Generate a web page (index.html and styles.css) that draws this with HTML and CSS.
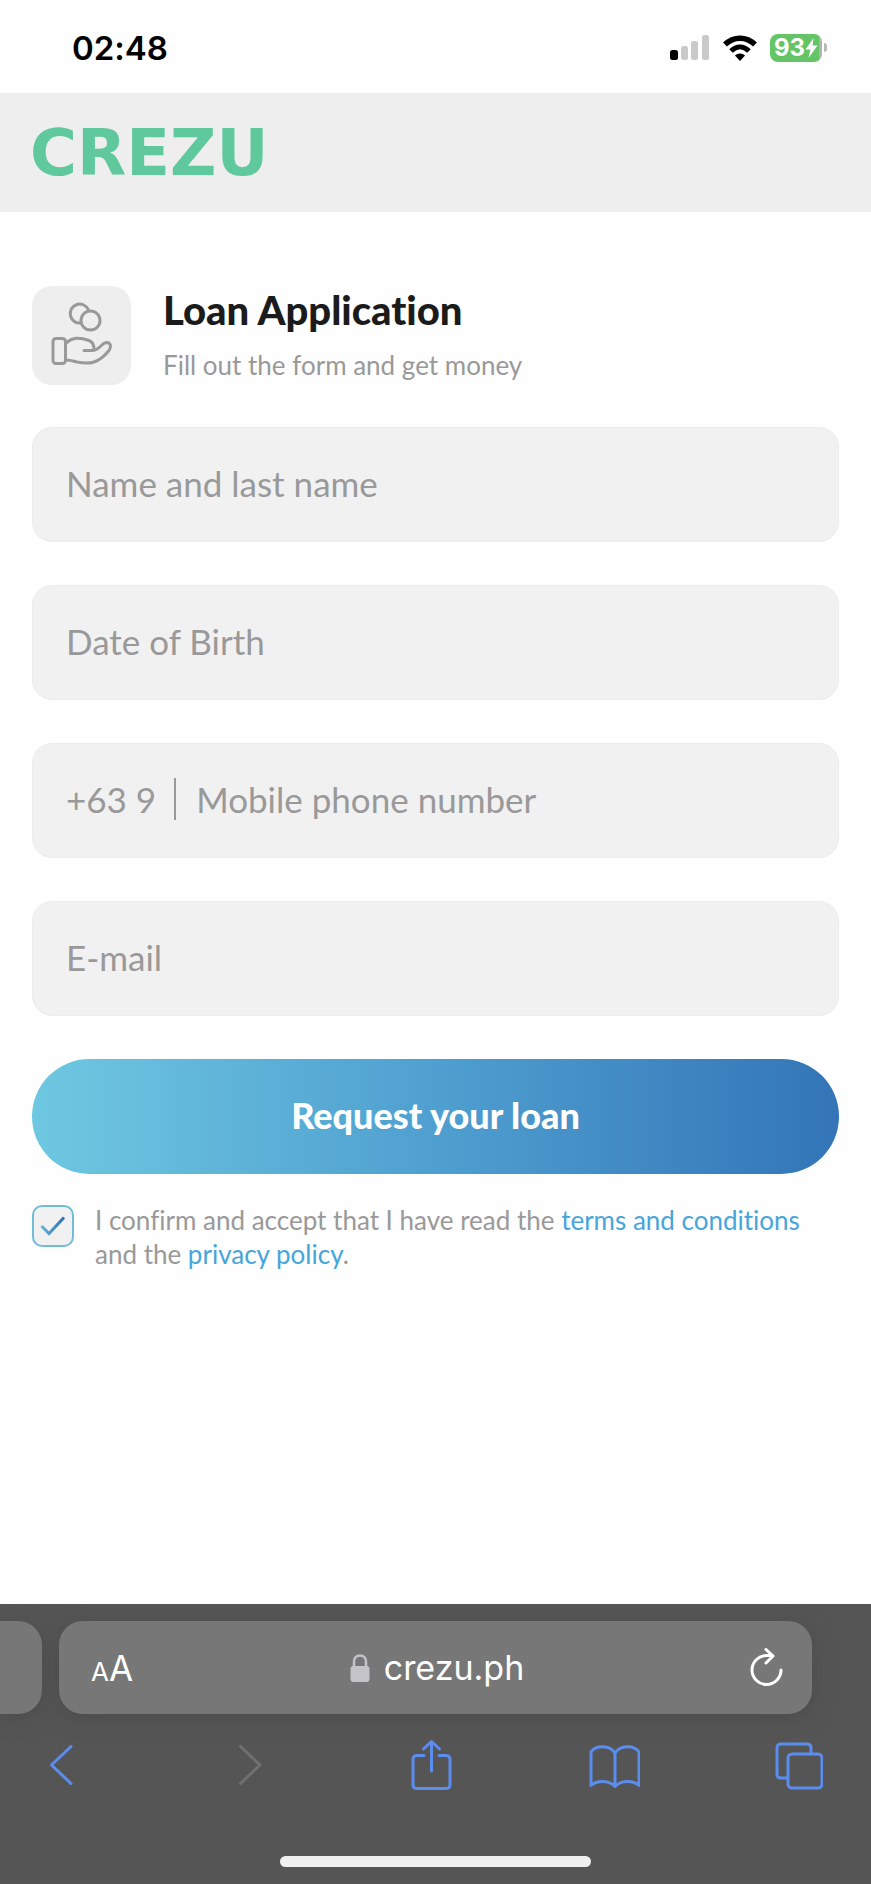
FILE: index.html
```html
<!DOCTYPE html>
<html lang="en">
<head>
    <meta charset="UTF-8">
    <meta name="viewport" content="width=device-width, initial-scale=1.0">
    <title>Loan Application</title>
    <link rel="stylesheet" href="styles.css">
</head>
<body>
    <div class="status-bar">
        <span class="time">02:48</span>
        <div class="status-icons">
            <svg class="signal" width="40" height="28" viewBox="0 0 40 28">
                <rect x="0" y="16" width="8" height="10" rx="2.5" fill="#000"/>
                <rect x="11" y="12" width="7" height="14" rx="2.5" fill="#c9c9c9"/>
                <rect x="21" y="7" width="7" height="19" rx="2.5" fill="#c9c9c9"/>
                <rect x="32" y="1" width="7" height="25" rx="2.5" fill="#c9c9c9"/>
            </svg>
            <svg class="wifi" width="36" height="28" viewBox="0 0 36 28">
                <path d="M3 10.500C11.500 2 24.500 2 33 10.500" fill="none" stroke="#000" stroke-width="5.500"/>
                <path d="M9 17C14.500 11.500 21.500 11.500 27 17" fill="none" stroke="#000" stroke-width="5"/>
                <path d="M18 27L13 21.500C15.500 18.800 20.500 18.800 23 21.500Z"/>
            </svg>
            <div class="battery">
                <span class="battery-level">93</span>
                <svg width="13" height="20" viewBox="0 0 13 20"><path d="M8.500 0L0.500 11.500H5.500L3.500 20L12.500 7.500H7.500Z" fill="#fff"/></svg>
            </div>
            <span class="battery-tip"></span>
        </div>
    </div>

    <header class="site-header">
        <a class="logo" href="#">CREZU</a>
    </header>

    <main class="content">
        <section class="intro">
            <div class="intro-icon">
                <svg width="99" height="99" viewBox="0 0 99 99" fill="none" stroke="#999" stroke-width="3" stroke-linecap="round" stroke-linejoin="round">
                    <path d="M49 37A9.500 9.500 0 1 1 56.500 24"/>
                    <circle cx="58.500" cy="34.500" r="9.500"/>
                    <rect x="21" y="52.500" width="12.500" height="25" rx="3"/>
                    <path d="M34 57C41 51 47 51 57 54.500C61 56 62 59 62 63.500"/>
                    <path d="M52 64.500H60C68 64.500 69 57 74.500 56.500C79 56.500 79.500 61 77 64.500C66 78 57 78.500 45 76C41 75 38 74 34 74"/>
                </svg>
            </div>
            <div class="intro-text">
                <h1>Loan Application</h1>
                <p>Fill out the form and get money</p>
            </div>
        </section>

        <form class="loan-form">
            <input class="field" type="text" id="name" placeholder="Name and last name" aria-label="Name and last name">
            <input class="field" type="text" id="birth" placeholder="Date of Birth" aria-label="Date of Birth">
            <div class="field phone">
                <label class="prefix" for="phone">+63 9</label>
                <input class="phone-input" type="tel" id="phone" placeholder="Mobile phone number" aria-label="Mobile phone number">
            </div>
            <input class="field" type="email" id="email" placeholder="E-mail" aria-label="E-mail">
            <button class="submit" type="submit">Request your loan</button>
        </form>

        <div class="agree">
            <div class="check">
                <input type="checkbox" id="agree" checked>
                <svg class="tick" width="42" height="42" viewBox="0 0 42 42">
                    <defs>
                        <linearGradient id="tick-color">
                            <stop offset="0" stop-color="#66b5d9"/>
                            <stop offset="1" stop-color="#2d6fb0"/>
                        </linearGradient>
                    </defs>
                    <path d="M9.500 21L17 28.500L32 12.500" fill="none" stroke="url(#tick-color)" stroke-width="3"/>
                </svg>
            </div>
            <label for="agree">I confirm and accept that I have read the <a href="#">terms and conditions</a> and the <a href="#">privacy policy</a>.</label>
        </div>
    </main>

    <footer class="browser-bar">
        <div class="tabs">
            <div class="prev-tab"></div>
            <div class="address">
                <button class="text-size" type="button"><small>A</small>A</button>
                <a class="url" href="#">
                    <svg width="20" height="28" viewBox="0 0 20 28">
                        <path d="M4 13V7.500C4 -0.500 16 -0.500 16 7.500V13" fill="none" stroke="#c4c4ca" stroke-width="2.500"/>
                        <rect x="0.500" y="12" width="19" height="16" rx="3" fill="#c4c4ca"/>
                    </svg>
                    crezu.ph
                </a>
                <button class="reload" type="button" aria-label="Reload">
                    <svg width="34" height="40" viewBox="0 0 34 40" fill="none" stroke="#fff" stroke-width="3" stroke-linecap="round" stroke-linejoin="round">
                        <path d="M32 22A14.500 14.500 0 1 1 17.500 7.500H23"/>
                        <path d="M17 1.500L24 8L17 15"/>
                    </svg>
                </button>
            </div>
        </div>
        <nav class="toolbar">
            <button type="button" aria-label="Back">
                <svg width="48" height="52" viewBox="0 0 48 52"><path d="M34 8.500L14.500 27L34 45.500"/></svg>
            </button>
            <button type="button" aria-label="Forward" disabled>
                <svg width="48" height="52" viewBox="0 0 48 52"><path d="M19.500 8.500L39 27L19.500 45.500"/></svg>
            </button>
            <button type="button" aria-label="Share">
                <svg width="48" height="52" viewBox="0 0 48 52">
                    <path d="M20 17.500H13Q9 17.500 9 21.500V46.500Q9 50.500 13 50.500H42Q46 50.500 46 46.500V21.500Q46 17.500 42 17.500H35"/>
                    <path d="M27.500 33V3.500M19.500 11L27.500 3.500L35.500 11"/>
                </svg>
            </button>
            <button type="button" aria-label="Bookmarks">
                <svg width="52" height="52" viewBox="0 0 52 52"><path d="M27 15V48.500M27 15C22 7 8 6.500 3 14V47.500C9 42 21 42 27 48.500C33 42 45 42 51 47.500V14C46 6.500 32 7 27 15"/></svg>
            </button>
            <button type="button" aria-label="Tabs">
                <svg width="48" height="52" viewBox="0 0 48 52">
                    <path d="M12 40H6Q2 40 2 36V10Q2 6 6 6H32Q36 6 36 10V15"/>
                    <rect x="13" y="16" width="34" height="34" rx="4"/>
                </svg>
            </button>
        </nav>
        <div class="home-indicator"></div>
    </footer>
</body>
</html>
```

FILE: styles.css
```css
* {
    box-sizing: border-box;
}
body {
    font-family: Lato, "Open Sans", sans-serif;
    font-variant-ligatures: none;
    margin: 0;
    min-height: 100vh;
    display: flex;
    flex-direction: column;
    background-color: #fefefe;
    color: #999;
}
a {
    text-decoration: none;
}
button {
    border: none;
    padding: 0;
    background: none;
    font-family: inherit;
    cursor: pointer;
}
svg {
    display: block;
}

/* Status bar */
.status-bar {
    height: 93px;
    padding: 2px 44px 0 72px;
    display: flex;
    align-items: center;
    justify-content: space-between;
    font-family: Inter, sans-serif;
}
.time {
    font-size: 33px;
    font-weight: 600;
    line-height: 40px;
    color: #000;
}
.status-icons {
    display: flex;
    align-items: center;
}
.wifi {
    margin: 0 12px;
}
.battery {
    width: 52px;
    height: 28px;
    border-radius: 8px;
    display: flex;
    align-items: center;
    justify-content: center;
    background: linear-gradient(to right, #65c466 94%, #a9b8aa 94%);
}
.battery-level {
    font-size: 24px;
    font-weight: 700;
    line-height: 28px;
    color: #fff;
}
.battery-tip {
    width: 3px;
    height: 9px;
    margin-left: 2px;
    border-radius: 0 3px 3px 0;
    background-color: #b9b9b9;
}

/* Header */
.site-header {
    height: 119px;
    padding: 0 30px;
    display: flex;
    align-items: center;
    background-color: #eee;
}
.logo {
    font-family: "DejaVu Sans", sans-serif;
    font-size: 64px;
    font-weight: 700;
    line-height: 72px;
    color: #5fc89d;
}

/* Form */
.content {
    flex: 1;
    padding: 74px 32px 40px;
}
.intro {
    display: flex;
    gap: 32px;
    margin-bottom: 42px;
}
.intro-icon {
    width: 99px;
    height: 99px;
    border-radius: 20px;
    background-color: #eee;
}
.intro-text h1 {
    margin: 0;
    font-size: 40px;
    font-weight: 900;
    line-height: 49px;
    color: #1b1b1b;
}
.intro-text p {
    margin: 10px 0 0;
    font-size: 26px;
    line-height: 40px;
}
.loan-form {
    display: flex;
    flex-direction: column;
    gap: 43px;
}
.field {
    width: 100%;
    height: 115px;
    padding: 0 33px 4px;
    border: 1px solid #ececec;
    border-radius: 20px;
    background-color: #f1f1f1;
    font-family: inherit;
    font-size: 35px;
    color: #999;
}
.field::placeholder,
.phone-input::placeholder {
    color: #999;
    opacity: 1;
}
.phone {
    display: flex;
    align-items: center;
}
.prefix {
    padding-right: 18px;
    border-right: 2px solid #999;
    line-height: 42px;
}
.phone-input {
    flex: 1;
    min-width: 0;
    padding: 0 0 0 20px;
    border: none;
    background: none;
    font: inherit;
    color: inherit;
}
.submit {
    height: 115px;
    padding-bottom: 4px;
    border-radius: 58px;
    background: linear-gradient(to right, #6ec8e1, #4f9fd0 50%, #3375b7);
    font-size: 36px;
    font-weight: 900;
    color: #fff;
}
.agree {
    display: flex;
    gap: 21px;
    margin-top: 31px;
    font-size: 26px;
    line-height: 34px;
}
.agree label {
    margin-top: -2px;
}
.agree a {
    color: #46a5da;
}
.check {
    position: relative;
    flex: none;
    width: 42px;
    height: 42px;
}
.check input {
    appearance: none;
    display: block;
    width: 42px;
    height: 42px;
    margin: 0;
    border: 2px solid #70bdd8;
    border-radius: 10px;
    background-color: #f1f1f1;
}
.tick {
    position: absolute;
    top: 0;
    left: 0;
    display: none;
    pointer-events: none;
}
.check input:checked + .tick {
    display: block;
}

/* Browser bar */
.browser-bar {
    padding: 17px 0;
    background-color: #555;
    font-family: Inter, sans-serif;
}
.tabs {
    display: flex;
    gap: 17px;
    padding-right: 59px;
}
.prev-tab {
    width: 42px;
    border-radius: 0 24px 24px 0;
    background-color: #777;
    box-shadow: 0 4px 20px #4c4c4c;
}
.address {
    flex: 1;
    height: 93px;
    padding: 0 29px 0 32px;
    border-radius: 24px;
    display: grid;
    grid-template-columns: 1fr auto 1fr;
    align-items: center;
    background-color: #777;
    box-shadow: 0 4px 20px #4c4c4c;
}
.text-size {
    justify-self: start;
    padding-top: 4px;
    font-size: 35px;
    line-height: 48px;
    color: #fff;
}
.text-size small {
    font-size: 26px;
}
.url {
    display: flex;
    align-items: center;
    gap: 14px;
    font-size: 34px;
    line-height: 42px;
    color: #fff;
}
.reload {
    justify-self: end;
}
.toolbar {
    display: flex;
    justify-content: space-between;
    margin-top: 24px;
    padding: 0 48px 0 37px;
}
.toolbar svg {
    fill: none;
    stroke: #5b8def;
    stroke-width: 3;
    stroke-linecap: round;
    stroke-linejoin: round;
}
.toolbar button:disabled svg {
    stroke: #707070;
}
.home-indicator {
    width: 311px;
    height: 11px;
    margin: 66px auto 0;
    border-radius: 6px;
    background-color: #f0f0f0;
}
```
